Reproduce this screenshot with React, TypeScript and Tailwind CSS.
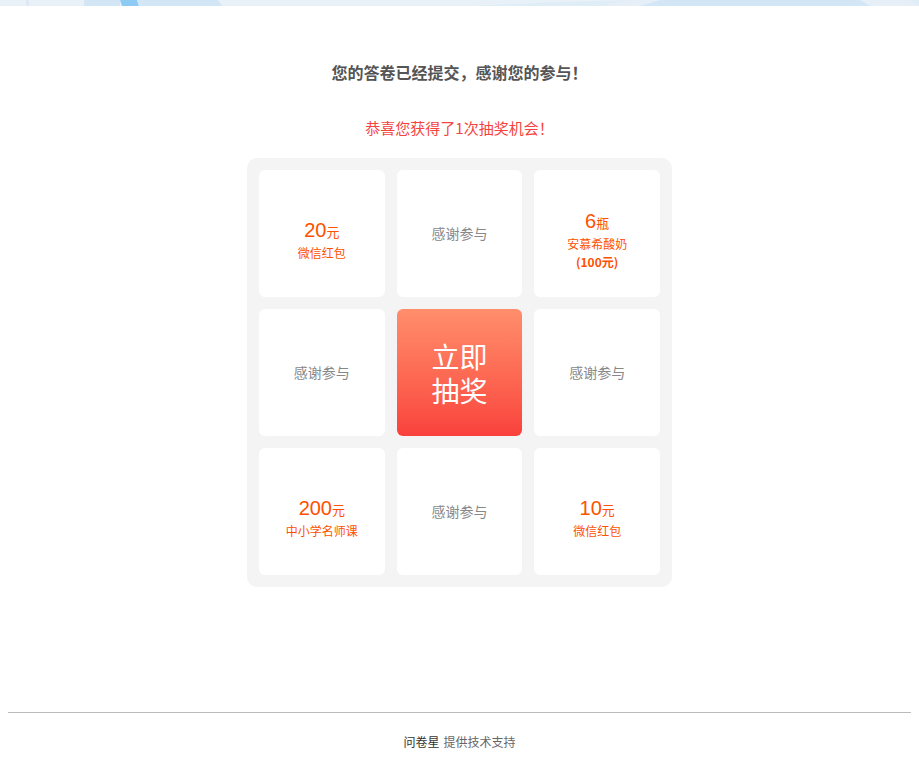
const font = {
  fontFamily: '"Noto Sans CJK SC", "Liberation Sans", sans-serif',
};

type Prize = {
  kind: "prize" | "none" | "start";
  num?: string;
  unit?: string;
  lines?: string[];
  bold?: string;
};

const cells: Prize[] = [
  { kind: "prize", num: "20", unit: "元", lines: ["微信红包"] },
  { kind: "none" },
  { kind: "prize", num: "6", unit: "瓶", lines: ["安慕希酸奶"], bold: "(100元)" },
  { kind: "none" },
  { kind: "start" },
  { kind: "none" },
  { kind: "prize", num: "200", unit: "元", lines: ["中小学名师课"] },
  { kind: "none" },
  { kind: "prize", num: "10", unit: "元", lines: ["微信红包"] },
];

const TopStrip = () => (
  <div className="h-[6px] w-full bg-[#e8f0f8]">
    <svg width="100%" height="6" viewBox="0 0 919 6" preserveAspectRatio="none">
      <rect x="26" y="0" width="3" height="6" fill="#dde8f4" />
      <rect x="84" y="0" width="36" height="6" fill="#d3e6f6" />
      <polygon points="120,0 137,0 139,6 122,6" fill="#8ecbf4" />
      <polygon points="137,0 218,0 222,6 139,6" fill="#d3e6f6" />
      <polygon points="470,6 560,2 640,0 919,0 919,6" fill="#dfedf7" />
      <polygon points="600,6 630,0 910,0 919,6" fill="#e6eff8" />
      <polygon points="640,6 660,0 860,0 870,6" fill="#d3e6f6" />
    </svg>
  </div>
);

const Cell = ({ c }: { c: Prize }) => {
  if (c.kind === "start") {
    return (
      <div className="flex h-[127px] cursor-pointer items-center justify-center rounded-[6px] bg-gradient-to-b from-[#ff8d6c] to-[#f9403c] pt-[6px] text-center font-['Liberation_Sans','Noto_Sans_CJK_SC',sans-serif] text-[28px] leading-[34px] text-white">
        立即
        <br />
        抽奖
      </div>
    );
  }
  if (c.kind === "none") {
    return (
      <div className="flex h-[127px] items-center justify-center rounded-[6px] bg-white text-[14px] text-[#888]">
        感谢参与
      </div>
    );
  }
  return (
    <div className="flex h-[127px] flex-col items-center justify-center rounded-[6px] bg-white pt-3 text-[#ff5000]">
      <div className="leading-[24px]">
        <span className="font-['Liberation_Sans'] text-[20px]">{c.num}</span>
        <span className="text-[13px]">{c.unit}</span>
      </div>
      {c.lines?.map((l) => (
        <div key={l} className="text-[12px] leading-[18px]">
          {l}
        </div>
      ))}
      {c.bold && <div className="text-[12px] font-bold leading-[18px]">{c.bold}</div>}
    </div>
  );
};

export default function App() {
  return (
    <div className="min-h-[768px] w-full bg-white" style={font}>
      <TopStrip />

      <div className="pt-[54px] text-center text-[16px] font-bold leading-[24px] text-[#555]">
        您的答卷已经提交，感谢您的参与！
      </div>

      <div className="mt-[33px] text-center text-[15px] leading-[22px] text-[#f5443e]">
        恭喜您获得了1次抽奖机会！
      </div>

      <div className="mx-auto mt-[19px] w-[425px] rounded-[10px] bg-[#f4f4f4] p-3">
        <div className="grid grid-cols-3 gap-3">
          {cells.map((c, i) => (
            <Cell key={i} c={c} />
          ))}
        </div>
      </div>

      <div className="mx-2 mt-[125px] border-t border-[#bbb]" />

      <div className="mt-[19px] text-center text-[12px] leading-[20px]">
        <span className="text-[#333]">问卷星</span>
        <span className="ml-1 text-[#666]">提供技术支持</span>
      </div>
    </div>
  );
}
